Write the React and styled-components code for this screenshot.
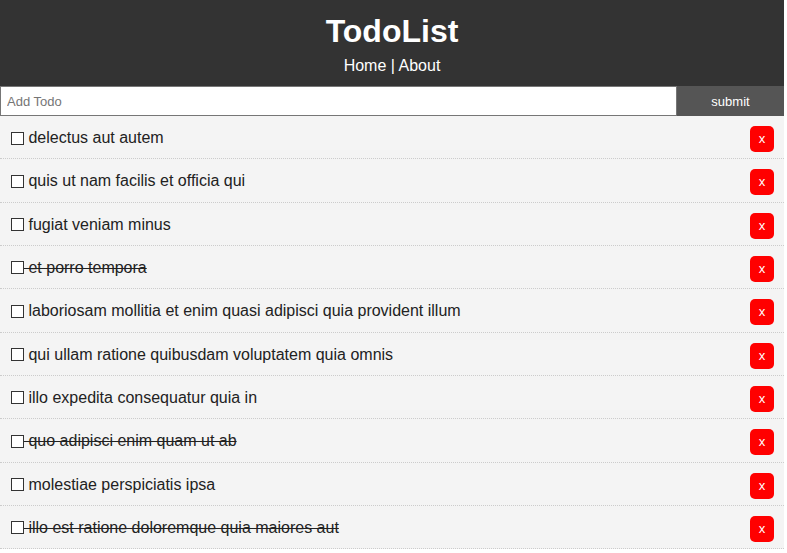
import { useState } from "react";
import styled, { createGlobalStyle } from "styled-components";

const initialTodos = [
  { id: 1, title: "delectus aut autem", completed: false },
  { id: 2, title: "quis ut nam facilis et officia qui", completed: false },
  { id: 3, title: "fugiat veniam minus", completed: false },
  { id: 4, title: "et porro tempora", completed: true },
  {
    id: 5,
    title: "laboriosam mollitia et enim quasi adipisci quia provident illum",
    completed: false,
  },
  { id: 6, title: "qui ullam ratione quibusdam voluptatem quia omnis", completed: false },
  { id: 7, title: "illo expedita consequatur quia in", completed: false },
  { id: 8, title: "quo adipisci enim quam ut ab", completed: true },
  { id: 9, title: "molestiae perspiciatis ipsa", completed: false },
  { id: 10, title: "illo est ratione doloremque quia maiores aut", completed: true },
];

export default function App() {
  const [todos, setTodos] = useState(initialTodos);
  const [title, setTitle] = useState("");

  const toggle = (id) =>
    setTodos(todos.map((t) => (t.id === id ? { ...t, completed: !t.completed } : t)));

  const remove = (id) => setTodos(todos.filter((t) => t.id !== id));

  const addTodo = (e) => {
    e.preventDefault();
    if (!title.trim()) return;
    setTodos([...todos, { id: Date.now(), title, completed: false }]);
    setTitle("");
  };

  return (
    <Page>
      <GlobalStyle />
      <Header>
        <h1>TodoList</h1>
        <Nav>
          <a href="#/">Home</a> | <a href="#/about">About</a>
        </Nav>
      </Header>

      <Form onSubmit={addTodo}>
        <TodoInput
          type="text"
          placeholder="Add Todo"
          value={title}
          onChange={(e) => setTitle(e.target.value)}
        />
        <Submit type="submit">submit</Submit>
      </Form>

      {todos.map((todo) => (
        <Item key={todo.id}>
          <Label done={todo.completed}>
            <Check type="checkbox" onChange={() => toggle(todo.id)} />
            <span>{"\u00a0" + todo.title}</span>
          </Label>
          <DeleteBtn onClick={() => remove(todo.id)}>x</DeleteBtn>
        </Item>
      ))}
    </Page>
  );
}

const GlobalStyle = createGlobalStyle`
  * {
    box-sizing: border-box;
  }
  body {
    margin: 0;
    background: #fff;
    font-family: "Liberation Sans", Arial, sans-serif;
  }
`;

const Page = styled.div`
  width: 784px;
`;

const Header = styled.header`
  background: #333;
  color: #fff;
  text-align: center;
  padding: 13px 0 11px;

  h1 {
    margin: 0 0 7px;
    font-size: 32px;
    line-height: 37px;
    font-weight: 700;
  }
`;

const Nav = styled.div`
  font-size: 16px;
  line-height: 18px;

  a {
    color: #fff;
    text-decoration: none;
  }
`;

const Form = styled.form`
  display: flex;
  height: 30px;
`;

const TodoInput = styled.input`
  flex: 1;
  height: 30px;
  padding: 5px 5px 5px 6px;
  border: 1px solid #767676;
  font-family: "Liberation Sans", Arial, sans-serif;
  font-size: 13px;
  outline: none;

  &::placeholder {
    color: #757575;
  }
`;

const Submit = styled.button`
  width: 107px;
  height: 30px;
  border: none;
  background: #555;
  color: #fff;
  font-family: "Liberation Sans", Arial, sans-serif;
  font-size: 13px;
  cursor: pointer;
`;

const Item = styled.div`
  display: flex;
  align-items: flex-start;
  height: 43.33px;
  padding: 10px 10px 0 11px;
  background: #f4f4f4;
  border-bottom: 1px dotted #ccc;
`;

const Label = styled.label`
  display: flex;
  align-items: center;
  margin-top: 3px;
  font-size: 16px;
  line-height: 18px;
  color: #222;
  text-decoration: ${(p) => (p.done ? "line-through" : "none")};

  span {
    white-space: pre;
  }
`;

const Check = styled.input`
  appearance: none;
  width: 13px;
  height: 13px;
  margin: 0;
  border: 1px solid #333;
  background: #fff;
  cursor: pointer;
`;

const DeleteBtn = styled.button`
  margin-left: auto;
  width: 24px;
  height: 26px;
  padding: 0;
  border: none;
  border-radius: 5px;
  background: #ff0000;
  color: #fff;
  font-family: "Liberation Sans", Arial, sans-serif;
  font-size: 13px;
  line-height: 26px;
  cursor: pointer;
`;
